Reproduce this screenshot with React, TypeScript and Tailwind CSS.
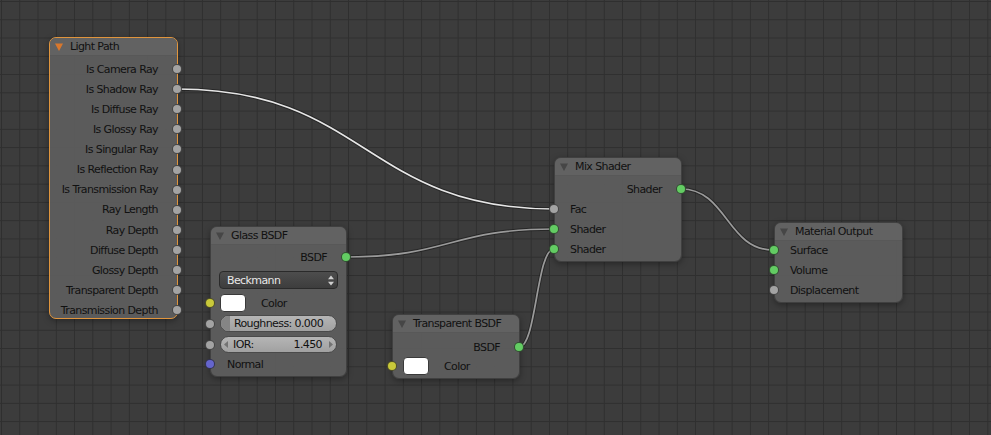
import React from "react";

type SockColor = "grey" | "green" | "yellow" | "blue";

const sockClass: Record<SockColor, string> = {
  grey: "bg-[#a3a3a3]",
  green: "bg-[#63cc63]",
  yellow: "bg-[#c9c93a]",
  blue: "bg-[#6565cc]",
};

function Socket({ side, color }: { side: "l" | "r"; color: SockColor }) {
  return (
    <i
      className={`absolute top-1/2 z-10 block h-[10px] w-[10px] -translate-y-1/2 rounded-full border border-[#1c1c1c]/70 ${
        side === "l" ? "left-[-6px]" : "right-[-5px]"
      } ${sockClass[color]}`}
    />
  );
}

function Tri({ orange }: { orange?: boolean }) {
  return (
    <svg width="8" height="8" viewBox="0 0 8 8" className="shrink-0">
      <path d="M0 0.5H8L4 8Z" fill={orange ? "#d8772c" : "#464646"} />
    </svg>
  );
}

function Node({
  className,
  title,
  selected,
  children,
}: {
  className: string;
  title: string;
  selected?: boolean;
  children: React.ReactNode;
}) {
  return (
    <div
      className={`absolute rounded-[7px] border ${
        selected ? "border-[#e0953d]" : "border-[#262626]/50"
      } bg-[#5e5e5e]/[0.92] shadow-[0_2px_6px_rgba(0,0,0,0.35)] ${className}`}
    >
      <div className="flex h-[18px] items-center gap-[7px] rounded-t-[6px] border-b border-black/10 bg-[#626262] pl-[5px]">
        <Tri orange={selected} />
        <span>{title}</span>
      </div>
      {children}
    </div>
  );
}

function OutRow({ label, color = "grey", h = "h-[20px]" }: { label: string; color?: SockColor; h?: string }) {
  return (
    <div className={`relative flex ${h} items-center justify-end pr-[19px]`}>
      <span className="whitespace-nowrap">{label}</span>
      <Socket side="r" color={color} />
    </div>
  );
}

function InRow({ label, color = "grey" }: { label: string; color?: SockColor }) {
  return (
    <div className="relative flex h-[20px] items-center pl-[15px]">
      <Socket side="l" color={color} />
      <span className="whitespace-nowrap">{label}</span>
    </div>
  );
}

function linkPath(x1: number, y1: number, x2: number, y2: number) {
  const d = (x2 - x1) * 0.5;
  return `M${x1} ${y1} C${x1 + d} ${y1} ${x2 - d} ${y2} ${x2} ${y2}`;
}

const links = [
  { p: linkPath(177, 89, 554, 209), c: "#e6e6e6" },
  { p: linkPath(346, 257, 554, 229), c: "#9a9a9a" },
  { p: linkPath(519, 347, 554, 249), c: "#9a9a9a" },
  { p: linkPath(681, 189, 773, 250), c: "#9a9a9a" },
];

const lightPathOutputs = [
  "Is Camera Ray",
  "Is Shadow Ray",
  "Is Diffuse Ray",
  "Is Glossy Ray",
  "Is Singular Ray",
  "Is Reflection Ray",
  "Is Transmission Ray",
  "Ray Length",
  "Ray Depth",
  "Diffuse Depth",
  "Glossy Depth",
  "Transparent Depth",
  "Transmission Depth",
];

export default function App() {
  return (
    <div className="relative h-[435px] w-[991px] overflow-hidden bg-[#3c3c3c] bg-[image:linear-gradient(to_right,#2f2f2f_1px,transparent_1px),linear-gradient(to_bottom,#2f2f2f_1px,transparent_1px)] bg-[size:18.27px_18.27px] bg-[position:1px_1px] font-['DejaVu_Sans',sans-serif] text-[11px] tracking-[-0.6px] text-[#111] [&_span]:pt-[2px]">
      <svg className="pointer-events-none absolute inset-0" width="991" height="435">
        {links.map((l, i) => (
          <g key={i} fill="none" strokeLinecap="round">
            <path d={l.p} stroke="#1e1e1e" strokeOpacity="0.7" strokeWidth="3.6" />
            <path d={l.p} stroke={l.c} strokeWidth="1.7" />
          </g>
        ))}
      </svg>

      {/* Light Path */}
      <Node className="left-[49px] top-[37px] h-[282px] w-[129px]" title="Light Path" selected>
        <div className="pt-[3px]">
          {lightPathOutputs.map((o) => (
            <OutRow key={o} label={o} h="h-[20.1px]" />
          ))}
        </div>
      </Node>

      {/* Glass BSDF */}
      <Node className="left-[210px] top-[226px] h-[151px] w-[137px]" title="Glass BSDF">
        <div className="pt-[2px]">
          <OutRow label="BSDF" color="green" />
          <div className="mx-[8px] mt-[4px] flex h-[18px] items-center justify-between rounded-[4px] border border-[#2a2a2a] bg-[linear-gradient(#4d4d4d,#3d3d3d)] pl-[7px] pr-[3px] text-[#e8e8e8]">
            <span>Beckmann</span>
            <svg width="6" height="11" viewBox="0 0 6 11">
              <path d="M3 0.5L6 4.2H0Z M3 10.5L0 6.8H6Z" fill="#cfcfcf" />
            </svg>
          </div>
          <div className="relative mt-[5px] flex h-[18px] items-center pl-[9px]">
            <Socket side="l" color="yellow" />
            <div className="h-[18px] w-[26px] rounded-[4px] border border-[#3a3a3a] bg-white" />
            <span className="ml-[15px]">Color</span>
          </div>
          <div className="relative mt-[3px] h-[17px]">
            <Socket side="l" color="grey" />
            <div className="relative mx-[9px] flex h-[17px] items-center justify-center overflow-hidden rounded-full border border-[#4a4a4a] bg-[linear-gradient(#b5b5b5,#a1a1a1)]">
              <div className="absolute inset-y-0 left-0 w-[9px] bg-[#858585]" />
              <span className="relative whitespace-nowrap">Roughness: 0.000</span>
            </div>
          </div>
          <div className="relative mt-[4px] h-[17px]">
            <Socket side="l" color="grey" />
            <div className="mx-[9px] flex h-[17px] items-center rounded-full border border-[#4a4a4a] bg-[linear-gradient(#b5b5b5,#a1a1a1)] pl-[3px] pr-[3px]">
              <svg width="4" height="7" viewBox="0 0 4 7" className="shrink-0">
                <path d="M4 0V7L0 3.5Z" fill="#737373" />
              </svg>
              <span className="ml-[5px] flex-1">IOR:</span>
              <span>1.450</span>
              <svg width="4" height="7" viewBox="0 0 4 7" className="ml-[7px] shrink-0">
                <path d="M0 0V7L4 3.5Z" fill="#737373" />
              </svg>
            </div>
          </div>
          <div className="mt-[1px]">
            <div className="relative flex h-[20px] items-center pl-[16px]">
              <Socket side="l" color="blue" />
              <span>Normal</span>
            </div>
          </div>
        </div>
      </Node>

      {/* Transparent BSDF */}
      <Node className="left-[392px] top-[314px] h-[65px] w-[128px]" title="Transparent BSDF">
        <div className="pt-[4px]">
          <OutRow label="BSDF" color="green" />
          <div className="relative flex h-[18px] items-center pl-[10px]">
            <Socket side="l" color="yellow" />
            <div className="h-[18px] w-[26px] rounded-[4px] border border-[#3a3a3a] bg-white" />
            <span className="ml-[15px]">Color</span>
          </div>
        </div>
      </Node>

      {/* Mix Shader */}
      <Node className="left-[554px] top-[157px] h-[105px] w-[128px]" title="Mix Shader">
        <div className="pt-[3px]">
          <OutRow label="Shader" color="green" />
          <InRow label="Fac" color="grey" />
          <InRow label="Shader" color="green" />
          <InRow label="Shader" color="green" />
        </div>
      </Node>

      {/* Material Output */}
      <Node className="left-[774px] top-[222px] h-[81px] w-[129px]" title="Material Output">
        <div className="-mt-[1px]">
          <InRow label="Surface" color="green" />
          <InRow label="Volume" color="green" />
          <InRow label="Displacement" color="grey" />
        </div>
      </Node>
    </div>
  );
}
